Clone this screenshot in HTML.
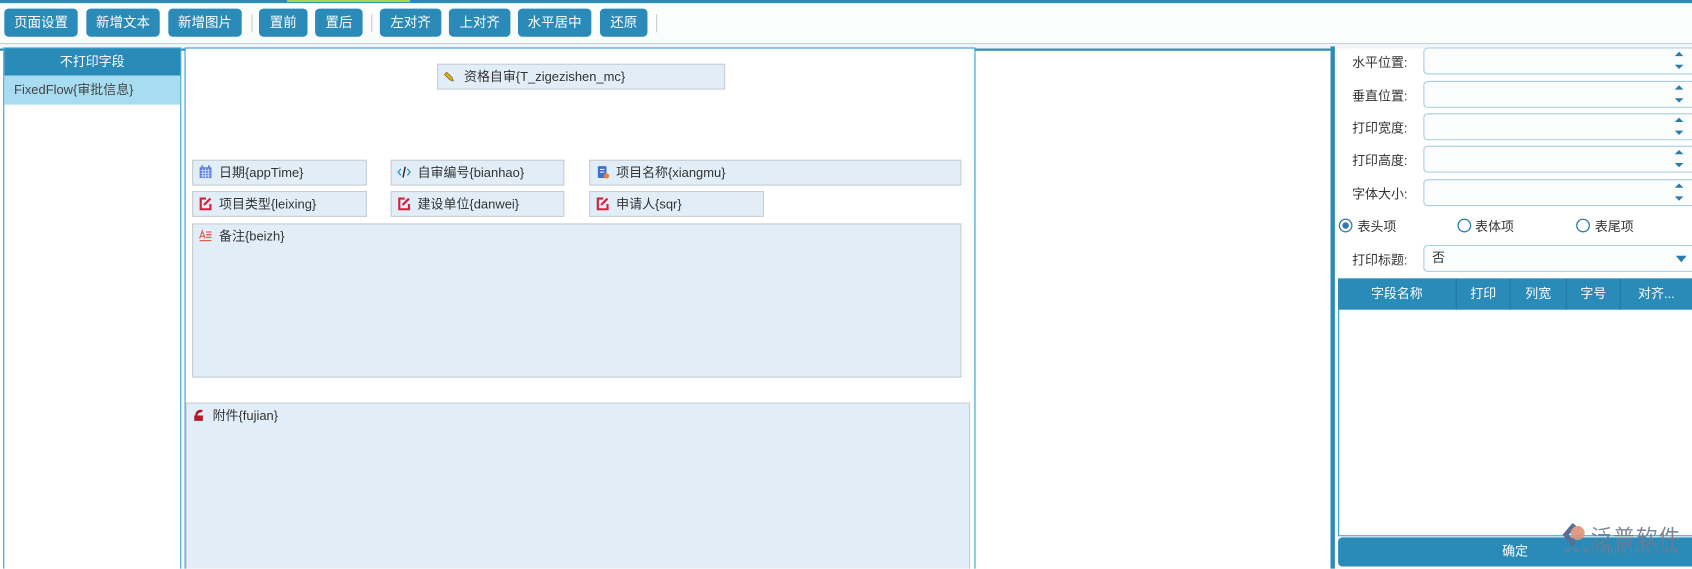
<!DOCTYPE html>
<html><head><meta charset="utf-8"><style>
*{margin:0;padding:0;box-sizing:border-box}
body{width:1692px;height:569px;overflow:hidden;background:#fff;position:relative;font-family:"Liberation Sans","Noto Sans CJK SC",sans-serif;font-size:12px;color:#333}
#w{position:absolute;left:0;top:0;width:1568px;height:527px;transform:scale(1.0791);transform-origin:0 0;overflow:hidden}
.a{position:absolute}
.btn{position:absolute;top:8px;height:26px;background:#2a8ab8;color:#fff;border-radius:4px;font-size:12.5px;line-height:26px;text-align:center}
.sep{position:absolute;top:13px;width:1px;height:17px;background:#ccc}
.f{position:absolute;background:#e1eef8;border:1px solid #c8ccd0;font-size:12px;line-height:22px;padding-left:24px;color:#333}
.f .i{position:absolute;left:5px;top:4px;width:13px;height:13px}
.lbl{position:absolute;left:1253px;font-size:12px;color:#333}
.inp{position:absolute;left:1319px;width:260px;height:25px;border:1px solid #a9cbe0;border-radius:4px;background:#fbfdfd}
.th{position:absolute;top:258px;height:29px;line-height:29px;color:#fff;text-align:center;font-size:12px;border-right:1px solid #2479a3}
</style></head><body><div id="w">
<div class="a" style="left:0;top:0;width:1568px;height:3px;background:#2a8ab8"></div>
<div class="a" style="left:266px;top:0;width:114px;height:2px;background:#a6d64a"></div>
<div class="a" style="left:0;top:3px;width:1568px;height:38px;background:#fbfdfd;border-bottom:1px solid #b5cad6"></div>
<div class="a" style="left:0;top:42px;width:1568px;height:3px;background:#f2f4f5"></div>
<div class="btn" style="left:4px;width:68px">页面设置</div>
<div class="btn" style="left:80px;width:68px">新增文本</div>
<div class="btn" style="left:156px;width:68px">新增图片</div>
<div class="sep" style="left:233px"></div>
<div class="btn" style="left:240px;width:45px">置前</div>
<div class="btn" style="left:292px;width:44px">置后</div>
<div class="sep" style="left:344px"></div>
<div class="btn" style="left:352px;width:57px">左对齐</div>
<div class="btn" style="left:416px;width:57px">上对齐</div>
<div class="btn" style="left:480px;width:68px">水平居中</div>
<div class="btn" style="left:556px;width:44px">还原</div>
<div class="sep" style="left:608px"></div>
<div class="a" style="left:0;top:45px;width:1233px;height:2px;background:#2a8ab8"></div>

<div class="a" style="left:3px;top:44px;width:165px;height:500px;border:1px solid #2a9fd0;background:#fff"></div>
<div class="a" style="left:4px;top:45px;width:163px;height:25px;background:#2a8ab8;color:#fff;text-align:center;line-height:24px;font-size:12px">不打印字段</div>
<div class="a" style="left:4px;top:70px;width:163px;height:27px;background:#a8dcf0;line-height:26px;padding-left:9px;font-size:12px;color:#444">FixedFlow{审批信息}</div>

<div class="a" style="left:171px;top:44px;width:733px;height:500px;border:1px solid #2a9fd0;background:#fff"></div>
<div class="f" style="left:405px;top:59px;width:267px;height:24px"><svg class="i" viewBox="0 0 13 13"><path d="M3 3l5 5 1 3-3-1-5-5z" fill="#e6b422" stroke="#8a6a10" stroke-width=".8"/></svg>资格自审{T_zigezishen_mc}</div>
<div class="f" style="left:178px;top:148px;width:162px;height:24px"><svg class="i" viewBox="0 0 13 13"><rect x="1" y="2" width="11" height="10" fill="#5b7ee0"/><path d="M2 5h9M2 7.5h9M2 10h9M4 3v9M6.5 3v9M9 3v9" stroke="#dbe4fb" stroke-width=".8"/><path d="M3.5 0v3M9.5 0v3" stroke="#5b7ee0" stroke-width="1.5"/></svg>日期{appTime}</div>
<div class="f" style="left:362px;top:148px;width:161px;height:24px"><svg class="i" viewBox="0 0 13 13"><path d="M3.5 3.5L1 6.5l2.5 3M9.5 3.5L12 6.5l-2.5 3" stroke="#2a8ad0" fill="none" stroke-width="1.2"/><path d="M7.5 1.5L5.5 11.5" stroke="#222" stroke-width="1.3"/></svg>自审编号{bianhao}</div>
<div class="f" style="left:546px;top:148px;width:345px;height:24px"><svg class="i" viewBox="0 0 13 13"><rect x="2" y="1" width="8" height="11" rx="1" fill="#3b6fd6"/><path d="M4 4h4M4 6.5h4" stroke="#fff"/><circle cx="10" cy="10" r="2.5" fill="#f08030"/></svg>项目名称{xiangmu}</div>
<div class="f" style="left:178px;top:177px;width:162px;height:24px"><svg class="i" viewBox="0 0 13 13"><path d="M7 2H2v10h9V7" stroke="#d8203a" stroke-width="2" fill="none"/><path d="M5 8l6-6" stroke="#d8203a" stroke-width="2"/></svg>项目类型{leixing}</div>
<div class="f" style="left:362px;top:177px;width:161px;height:24px"><svg class="i" viewBox="0 0 13 13"><path d="M7 2H2v10h9V7" stroke="#d8203a" stroke-width="2" fill="none"/><path d="M5 8l6-6" stroke="#d8203a" stroke-width="2"/></svg>建设单位{danwei}</div>
<div class="f" style="left:546px;top:177px;width:162px;height:24px"><svg class="i" viewBox="0 0 13 13"><path d="M7 2H2v10h9V7" stroke="#d8203a" stroke-width="2" fill="none"/><path d="M5 8l6-6" stroke="#d8203a" stroke-width="2"/></svg>申请人{sqr}</div>
<div class="f" style="left:178px;top:207px;width:713px;height:143px"><svg class="i" viewBox="0 0 13 13"><path d="M1 9L3.5 2 6 9M2 7h3" stroke="#e06050" fill="none" stroke-width="1.1"/><path d="M7 3h5M7 5.5h5M7 8h5M1 11h11" stroke="#e06050" stroke-width="1.2"/></svg>备注{beizh}</div>
<div class="f" style="left:172px;top:373px;width:727px;height:160px"><svg class="i" viewBox="0 0 13 13"><path d="M2 7h8v5H2z" fill="#b01a2a"/><path d="M3 7C3 3 6 1 10 2L9 4C7 4 5 5 5 7" fill="#b01a2a"/></svg>附件{fujian}</div>

<div class="a" style="left:1233px;top:43px;width:4px;height:490px;background:#2a8ab8"></div>
<div class="lbl" style="top:49px">水平位置:</div><div class="inp" style="top:44px"></div>
<div class="lbl" style="top:80px">垂直位置:</div><div class="inp" style="top:75px"></div>
<div class="lbl" style="top:110px">打印宽度:</div><div class="inp" style="top:105px"></div>
<div class="lbl" style="top:140px">打印高度:</div><div class="inp" style="top:135px"></div>
<div class="lbl" style="top:171px">字体大小:</div><div class="inp" style="top:166px"></div>
<svg class="a" style="left:1550px;top:44px" width="12" height="150" viewBox="0 0 12 150">
<g fill="#2a7ab0"><path d="M2 8l4-4 4 4zM2 16l4 4 4-4z"/><path transform="translate(0,31)" d="M2 8l4-4 4 4zM2 16l4 4 4-4z"/><path transform="translate(0,61)" d="M2 8l4-4 4 4zM2 16l4 4 4-4z"/><path transform="translate(0,91)" d="M2 8l4-4 4 4zM2 16l4 4 4-4z"/><path transform="translate(0,122)" d="M2 8l4-4 4 4zM2 16l4 4 4-4z"/></g></svg>
<svg class="a" style="left:1240px;top:202px" width="14" height="14"><circle cx="7" cy="7" r="5.8" fill="#fff" stroke="#2a7ab0" stroke-width="1.2"/><circle cx="7" cy="7" r="3" fill="#2a7ab0"/></svg>
<div class="lbl" style="left:1258px;top:201px">表头项</div>
<svg class="a" style="left:1350px;top:202px" width="14" height="14"><circle cx="7" cy="7" r="5.8" fill="#fff" stroke="#2a7ab0" stroke-width="1.2"/></svg>
<div class="lbl" style="left:1367px;top:201px">表体项</div>
<svg class="a" style="left:1460px;top:202px" width="14" height="14"><circle cx="7" cy="7" r="5.8" fill="#fff" stroke="#2a7ab0" stroke-width="1.2"/></svg>
<div class="lbl" style="left:1478px;top:201px">表尾项</div>
<div class="lbl" style="top:232px">打印标题:</div>
<div class="inp" style="top:227px;padding-left:7px;line-height:23px;font-size:12px">否</div>
<svg class="a" style="left:1553px;top:236px" width="10" height="8"><path d="M0 1h10L5 7z" fill="#2a7ab0"/></svg>
<div class="a" style="left:1240px;top:258px;width:340px;height:239px;border:1px solid #2a9fd0"></div>
<div class="a" style="left:1240px;top:258px;width:328px;height:29px;background:#2a8ab8"></div>
<div class="th" style="left:1240px;width:110px">字段名称</div>
<div class="th" style="left:1350px;width:50px">打印</div>
<div class="th" style="left:1400px;width:52px">列宽</div>
<div class="th" style="left:1452px;width:50px">字号</div>
<div class="th" style="left:1502px;width:66px;border:none">对齐...</div>
<div class="a" style="left:1240px;top:498px;width:340px;height:27px;background:#2a8ab8;border-radius:4px"></div>
<div class="a" style="left:1240px;top:498px;width:328px;height:27px;color:#fff;text-align:center;line-height:27px;font-size:12px">确定</div>
<svg class="a" style="left:1448px;top:485px" width="24" height="21" viewBox="0 0 24 21"><path d="M11 1L3 10.5l8 9.5" fill="none" stroke="#5a6f90" stroke-width="4.5"/><circle cx="14" cy="9" r="6.5" fill="#e0907a" opacity=".9"/></svg>
<div class="a" style="left:1474px;top:482px;font-size:20px;color:#6f7a90;letter-spacing:1px;opacity:.9">泛普软件</div>
<div class="a" style="left:1449px;top:505px;font-size:9.5px;color:#8a7a80;font-family:'Liberation Serif',serif;letter-spacing:1.8px;opacity:.85">www.fanpusoft.com</div>
</div></body></html>
